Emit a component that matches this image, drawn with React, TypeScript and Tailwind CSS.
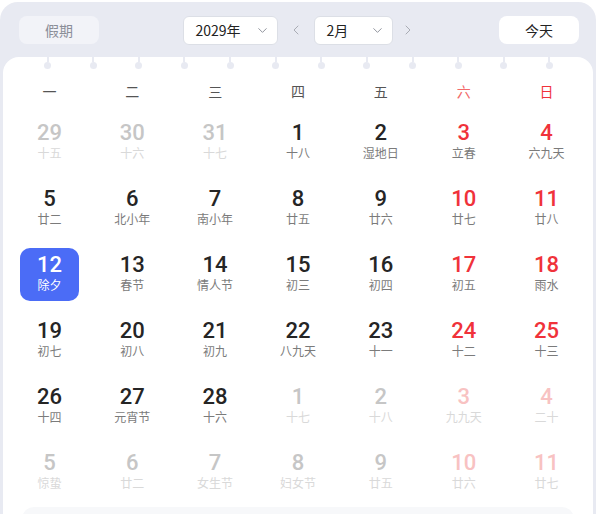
import { ChevronDown, ChevronLeft, ChevronRight } from 'lucide-react'

type Day = {
  n: number
  l: string
  other?: boolean
  weekend?: boolean
  selected?: boolean
}

const weekdays = ['一', '二', '三', '四', '五', '六', '日']

const raw: [number, string, boolean?][][] = [
  [[29, '十五', true], [30, '十六', true], [31, '十七', true], [1, '十八'], [2, '湿地日'], [3, '立春'], [4, '六九天']],
  [[5, '廿二'], [6, '北小年'], [7, '南小年'], [8, '廿五'], [9, '廿六'], [10, '廿七'], [11, '廿八']],
  [[12, '除夕'], [13, '春节'], [14, '情人节'], [15, '初三'], [16, '初四'], [17, '初五'], [18, '雨水']],
  [[19, '初七'], [20, '初八'], [21, '初九'], [22, '八九天'], [23, '十一'], [24, '十二'], [25, '十三']],
  [[26, '十四'], [27, '元宵节'], [28, '十六'], [1, '十七', true], [2, '十八', true], [3, '九九天', true], [4, '二十', true]],
  [[5, '惊蛰', true], [6, '廿二', true], [7, '女生节', true], [8, '妇女节', true], [9, '廿五', true], [10, '廿六', true], [11, '廿七', true]],
]

const weeks: Day[][] = raw.map((row) =>
  row.map(([n, l, other], i) => ({
    n,
    l,
    other,
    weekend: i >= 5,
    selected: !other && n === 12,
  }))
)

function DayCell({ d }: { d: Day }) {
  let num = 'text-[#252525]'
  let lunar = 'text-[#7b7b7b]'
  if (d.weekend) num = 'text-[#f0323a]'
  if (d.other) {
    num = d.weekend ? 'text-[#f8c2c2]' : 'text-[#c6c6c6]'
    lunar = 'text-[#d9d9d9]'
  }
  if (d.selected) {
    num = 'text-white'
    lunar = 'text-white'
  }
  return (
    <div className="flex h-[66px] items-center justify-center">
      <div
        className={`flex h-[53px] w-[59px] flex-col items-center justify-center rounded-[10px] pb-[3px] ${
          d.selected ? 'bg-[#4b6cf6]' : ''
        }`}
      >
        <span className={`font-['Roboto'] text-[22px] font-medium leading-[22px] ${num}`}>{d.n}</span>
        <span className={`mt-[2px] text-[12px] leading-[14px] ${lunar}`}>{d.l}</span>
      </div>
    </div>
  )
}

export default function App() {
  return (
    <div className="h-[514px] w-[596px] overflow-hidden bg-white font-['Noto_Sans_CJK_SC','Noto_Sans',sans-serif]">
      <div className="mt-[2px] flex h-[512px] flex-col overflow-hidden rounded-t-[18px] bg-[#e8eaf2] px-[3px]">
        {/* Header */}
        <div className="flex h-[55px] shrink-0 items-center justify-between pl-[16px] pr-[14px] pt-[1px]">
          <button className="flex h-[28px] w-[80px] items-center justify-center rounded-[8px] bg-[#f2f3f8] text-[14px] text-[#8b8e98]">
            假期
          </button>
          <div className="flex items-center">
            <div className="flex h-[29px] w-[95px] items-center justify-between rounded-[6px] border border-[#dcdfe6] bg-white pl-[12px] pr-[7px] text-[14px] text-[#222]">
              <span>2029年</span>
              <ChevronDown size={15} strokeWidth={1.5} className="text-[#8a8d96]" />
            </div>
            <ChevronLeft size={16} strokeWidth={1.5} className="mx-[10px] text-[#a9acb4]" />
            <div className="flex h-[29px] w-[79px] items-center justify-between rounded-[6px] border border-[#dcdfe6] bg-white pl-[12px] pr-[7px] text-[14px] text-[#222]">
              <span>2月</span>
              <ChevronDown size={15} strokeWidth={1.5} className="text-[#8a8d96]" />
            </div>
            <ChevronRight size={16} strokeWidth={1.5} className="ml-[7px] text-[#a9acb4]" />
          </div>
          <button className="flex h-[28px] w-[80px] items-center justify-center rounded-[8px] bg-white text-[14px] text-[#222]">
            今天
          </button>
        </div>

        {/* Calendar panel */}
        <div className="flex shrink-0 flex-col rounded-t-[16px] bg-white">
          <div className="flex justify-between pl-[41px] pr-[40px]">
            {Array.from({ length: 12 }).map((_, i) => (
              <div key={i} className="flex w-[7px] flex-col items-center">
                <div className="h-[5px] w-[2px] bg-[#e8eaf2]" />
                <div className="h-[7px] w-[7px] rounded-full bg-[#e8eaf2]" />
              </div>
            ))}
          </div>

          <div className="mt-[4px] grid grid-cols-7 px-[5px]">
            {weekdays.map((w, i) => (
              <div
                key={w}
                className={`flex h-[36px] items-center justify-center text-[14px] ${
                  i === 5 ? 'text-[#f26a6a]' : i === 6 ? 'text-[#f0323a]' : 'text-[#555]'
                }`}
              >
                {w}
              </div>
            ))}
          </div>

          <div className="grid grid-cols-7 px-[5px]">
            {weeks.flat().map((d, i) => (
              <DayCell key={i} d={d} />
            ))}
          </div>

          <div className="mx-[19px] mt-[2px] h-[20px] rounded-t-[12px] bg-[#f7f8fa]" />
        </div>
      </div>
    </div>
  )
}
